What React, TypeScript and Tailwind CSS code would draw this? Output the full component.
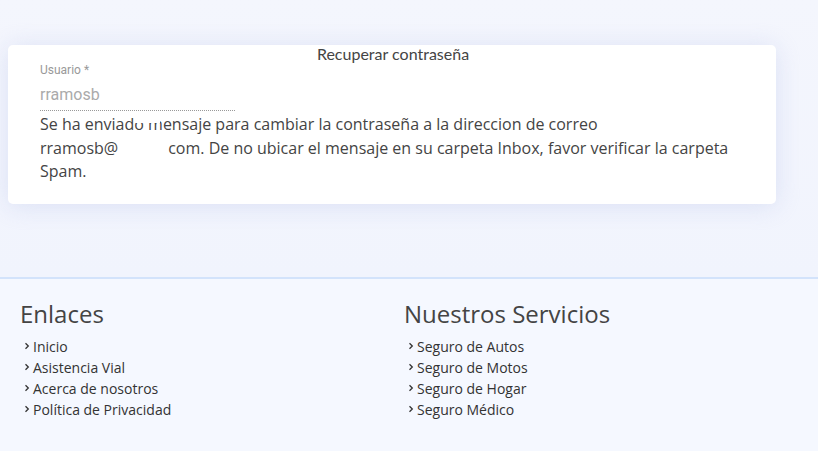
import React from 'react';

const Chevron = () => (
  <svg width="6" height="8" viewBox="0 0 6 8" className="mr-[3px] shrink-0">
    <path d="M1.5 1.2 L4.3 4 L1.5 6.8" fill="none" stroke="#333" strokeWidth="1.3" />
  </svg>
);

const FooterColumn = ({ title, links }: { title: string; links: string[] }) => (
  <div>
    <h3 className="text-[24px] leading-[32px] text-[#444]">{title}</h3>
    <ul className="mt-[6px]">
      {links.map((l) => (
        <li key={l} className="flex items-center text-[14px] leading-[21px] text-[#333] pl-[4px]">
          <Chevron />
          {l}
        </li>
      ))}
    </ul>
  </div>
);

const App = () => {
  return (
    <div className="w-[818px] h-[451px] overflow-hidden bg-[#f5f8ff] font-['Open_Sans',sans-serif]">
      <div className="bg-gradient-to-b from-[#f4f6fd] to-[#f1f4fd] pt-[45px] pb-[73px]">
        <div className="relative ml-[8px] w-[768px] bg-white rounded-[5px] shadow-[0_2px_24px_rgba(190,200,235,0.45)] px-[32px] pb-[20px]">
          <div className="text-center text-[16px] leading-[17px] text-[#444] font-['Lato',sans-serif] pl-[2px]">
            Recuperar contraseña
          </div>
          <div className="w-[195px] border-b border-dotted border-[#999] font-['Roboto',sans-serif]">
            <div className="text-[12px] leading-[14px] text-[#999] mt-[1px]">Usuario *</div>
            <div className="text-[16px] leading-[19px] text-[#aaa] mt-[8px] pb-[6px]">rramosb</div>
          </div>
          <p className="text-[16px] leading-[23.5px] text-[#444] mt-[2px]">
            Se ha enviado mensaje para cambiar la contraseña a la direccion de correo
            <br />
            rramosb@<span className="inline-block w-[50px]"></span>com. De no ubicar el mensaje en su carpeta Inbox, favor verificar la carpeta Spam.
          </p>
          <div className="absolute left-[127px] top-[71px] w-[25px] h-[7px] bg-white" />
        </div>
      </div>
      <div className="border-t-2 border-[#d3e3fb] grid grid-cols-[384px_1fr] px-[20px] pt-[19px]">
        <FooterColumn
          title="Enlaces"
          links={['Inicio', 'Asistencia Vial', 'Acerca de nosotros', 'Política de Privacidad']}
        />
        <FooterColumn
          title="Nuestros Servicios"
          links={['Seguro de Autos', 'Seguro de Motos', 'Seguro de Hogar', 'Seguro Médico']}
        />
      </div>
    </div>
  );
};

export default App;
